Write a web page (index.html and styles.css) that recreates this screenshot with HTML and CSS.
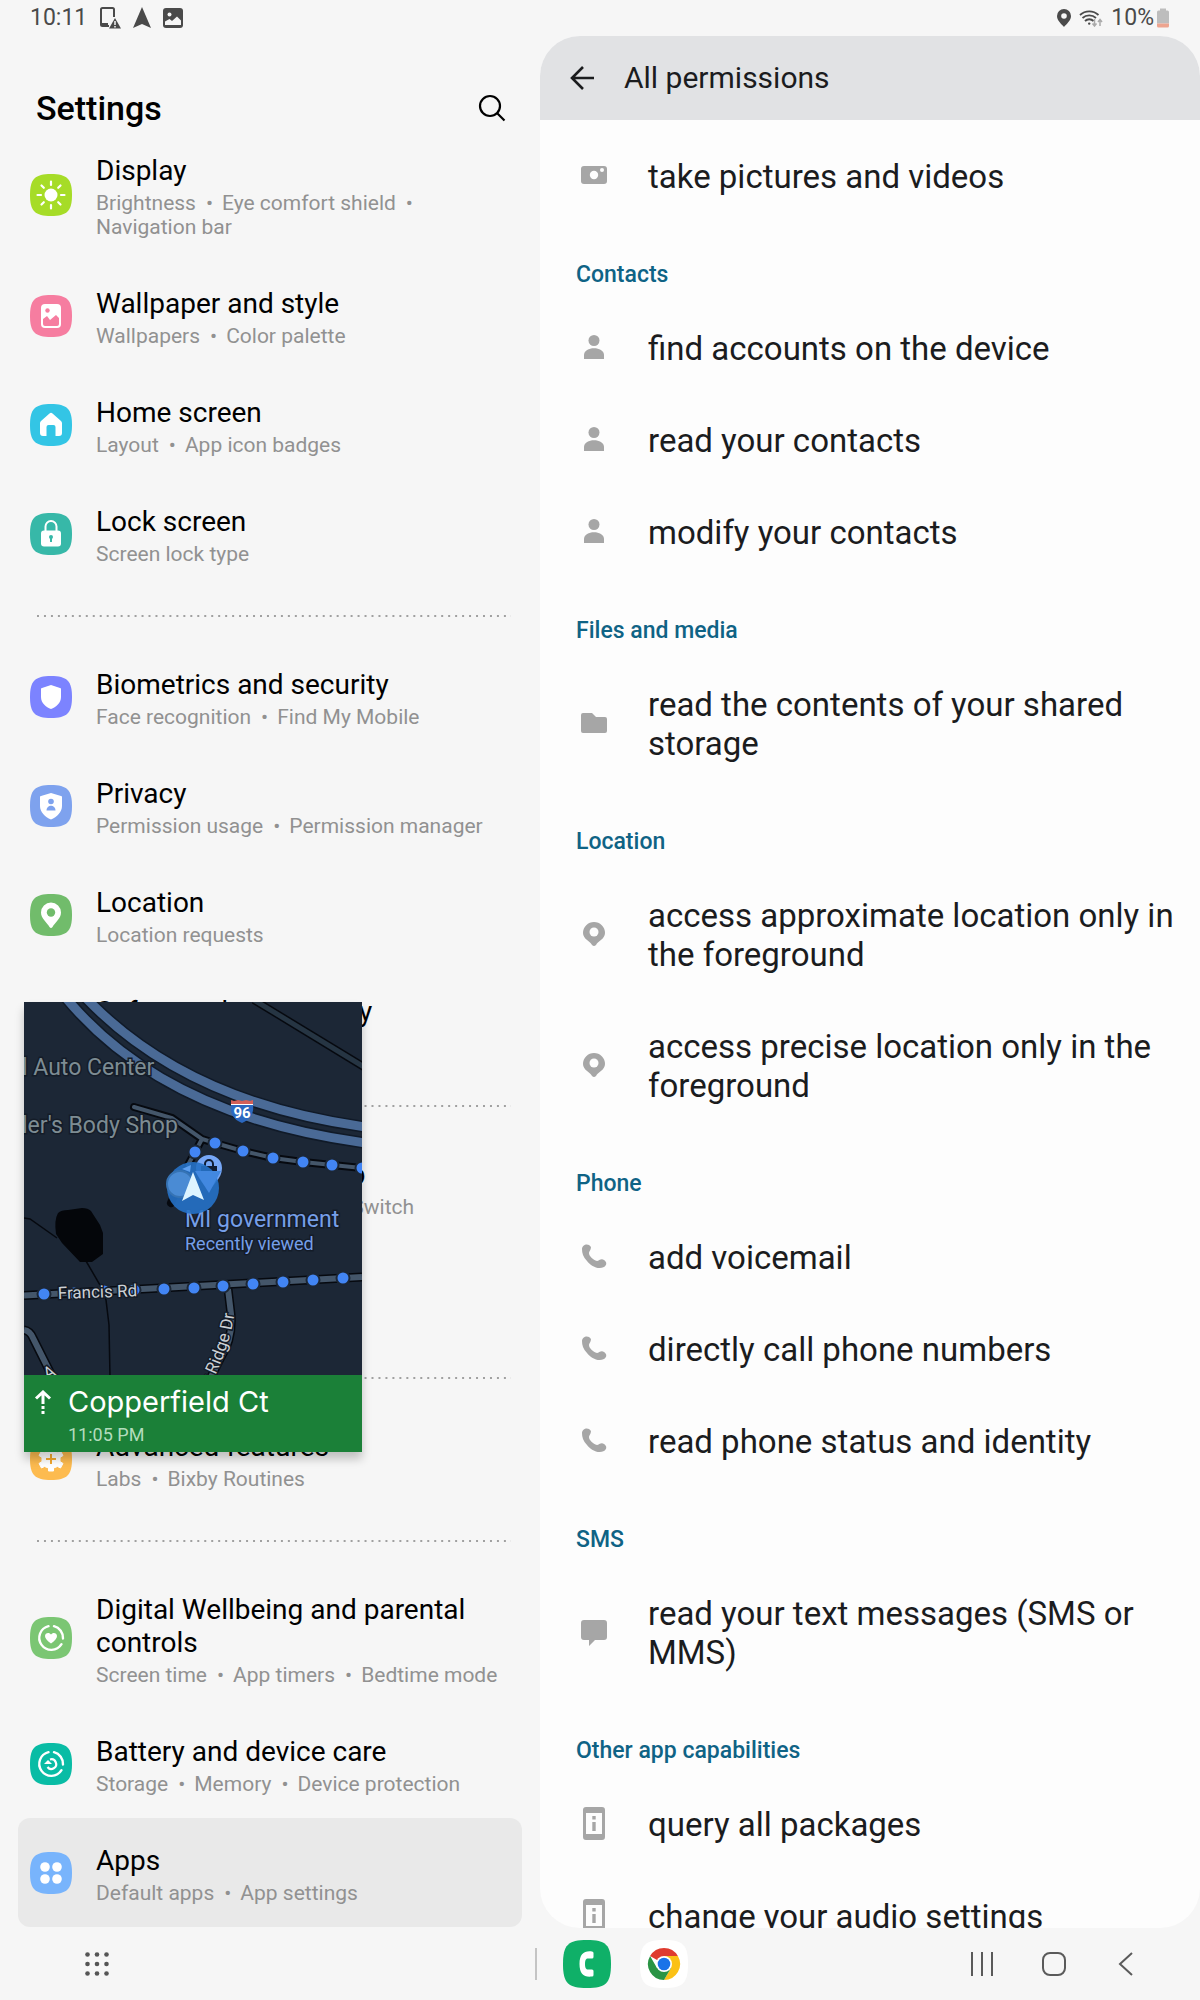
FILE: index.html
```html
<!DOCTYPE html>
<html lang="en">
<head>
<meta charset="utf-8">
<meta name="viewport" content="width=device-width, initial-scale=1">
<title>Settings</title>
<link rel="stylesheet" href="styles.css">
</head>
<body>
<div class="screen">
  <header class="status">
    <div class="status-group status-left">
      <time>10:11</time>
      <svg width="22" height="22" viewBox="0 0 22 22"><path d="M15 10V2.5A1.5 1.5 0 0 0 13.500 1h-10A1.500 1.500 0 0 0 2 2.500v15A1.500 1.500 0 0 0 3.500 19H10" fill="none" stroke="#4a4a4a" stroke-width="2"/><path d="M2 16h7v3H3z" fill="#4a4a4a"/><path d="M16 11l6 10.500H10z" fill="#4a4a4a"/><path d="M16 14v4M16 19v1.500" stroke="#f6f6f6" stroke-width="1.500"/></svg>
      <svg width="18" height="22" viewBox="0 0 18 22"><path d="M9 0l9 21-9-4-9 4z" fill="#4a4a4a"/></svg>
      <svg width="20" height="20" viewBox="0 0 20 20"><rect width="20" height="20" rx="3" fill="#4a4a4a"/><circle cx="6.500" cy="6.500" r="2" fill="#f6f6f6"/><path d="M2 13.500l4.500-2.500 2.500 2 5-4.500 4 4v4.500H2z" fill="#f6f6f6"/></svg>
    </div>
    <div class="status-group status-right">
      <svg width="14" height="18" viewBox="0 0 14 18"><path d="M7 0a7 7 0 0 0-7 7c0 4.500 4.500 8 7 11 2.500-3 7-6.500 7-11a7 7 0 0 0-7-7z" fill="#4a4a4a"/><circle cx="7" cy="7" r="2.800" fill="#f6f6f6"/></svg>
      <svg width="24" height="18" viewBox="0 0 24 18" fill="none" stroke="#4a4a4a" stroke-width="1.800"><path d="M1 6a13.500 13.500 0 0 1 18.500 0M3.500 9a10 10 0 0 1 13.500 0M6 12a6 6 0 0 1 8.500 0"/><circle cx="10.200" cy="14.600" r="1.200" fill="#4a4a4a" stroke="none"/><path d="M15.500 10v7M13.500 14.500l2 2.500 2-2.500M21 17v-6.500M19 13l2-2.500 2 2.500" stroke="#aaa" stroke-width="1.500"/></svg>
      <span class="battery">10%
        <svg width="12" height="20" viewBox="0 0 12 19"><path d="M3 2V0h6v2h1.500A1.500 1.500 0 0 1 12 3.500V15H0V3.500A1.500 1.500 0 0 1 1.500 2z" fill="#bdbdbd"/><path d="M0 15h12v2.500A1.500 1.500 0 0 1 10.500 19h-9A1.500 1.500 0 0 1 0 17.500z" fill="#eda48f"/></svg></span>
    </div>
  </header>

  <main class="panes">
    <nav class="settings" aria-label="Settings">
      <div class="settings-head">
        <h1>Settings</h1>
        <button class="icon-button" type="button" aria-label="Search"><svg width="28" height="28" viewBox="0 0 28 28" fill="none" stroke="#000" stroke-width="2.200"><circle cx="12" cy="12" r="10"/><path d="M19 19l7.500 7.500"/></svg></button>
      </div>

      <a class="item" href="#display">
        <svg class="tile" viewBox="0 0 42 42"><path fill="#a6dc27" d="M0 21C0 5 5 0 21 0s21 5 21 21-5 21-21 21S0 37 0 21z"/><circle cx="21" cy="21" r="6.500" fill="#fff"/><path d="M21 7.500v3.500M21 31v3.500M7.500 21h3.500M31 21h3.500M11.500 11.500l2.300 2.300M28.200 28.200l2.300 2.300M30.500 11.500l-2.300 2.300M13.800 28.200l-2.300 2.300" stroke="#fff" stroke-width="2.200" stroke-linecap="round"/></svg>
        <span class="label"><span class="title">Display</span><span class="sub">Brightness<i>•</i><wbr>Eye comfort shield<i>•</i><wbr>Navigation bar</span></span>
      </a>
      <a class="item" href="#wallpaper">
        <svg class="tile" viewBox="0 0 42 42"><path fill="#f67da0" d="M0 21C0 5 5 0 21 0s21 5 21 21-5 21-21 21S0 37 0 21z"/><rect x="11" y="9" width="20" height="24" rx="4" fill="#fff"/><circle cx="17.500" cy="15.500" r="2.200" fill="#f67da0"/><path d="M13 24l4-3 3 4 6-5 3 3v6a2 2 0 0 1-2 2H15a2 2 0 0 1-2-2z" fill="#f67da0"/></svg>
        <span class="label"><span class="title">Wallpaper and style</span><span class="sub">Wallpapers<i>•</i><wbr>Color palette</span></span>
      </a>
      <a class="item" href="#home">
        <svg class="tile" viewBox="0 0 42 42"><path fill="#33c5e5" d="M0 21C0 5 5 0 21 0s21 5 21 21-5 21-21 21S0 37 0 21z"/><path d="M19.500 9.600a2 2 0 0 1 3 0l8.500 7.400a3 3 0 0 1 1 2V29a3 3 0 0 1-3 3h-3.500v-9a2 2 0 0 0-2-2h-5a2 2 0 0 0-2 2v9H13a3 3 0 0 1-3-3V19a3 3 0 0 1 1-2z" fill="#fff"/></svg>
        <span class="label"><span class="title">Home screen</span><span class="sub">Layout<i>•</i><wbr>App icon badges</span></span>
      </a>
      <a class="item" href="#lock">
        <svg class="tile" viewBox="0 0 42 42"><path fill="#37b8a8" d="M0 21C0 5 5 0 21 0s21 5 21 21-5 21-21 21S0 37 0 21z"/><path d="M15.500 19v-5.500a5.500 5.500 0 0 1 11 0V19" fill="none" stroke="#fff" stroke-width="2"/><rect x="11" y="17.500" width="20" height="16" rx="3" fill="#fff"/><circle cx="21" cy="24" r="2" fill="#37b8a8"/><path d="M21 24v5" stroke="#37b8a8" stroke-width="2"/></svg>
        <span class="label"><span class="title">Lock screen</span><span class="sub">Screen lock type</span></span>
      </a>
      <hr class="dots">
      <a class="item" href="#biometrics">
        <svg class="tile" viewBox="0 0 42 42"><path fill="#7c83ff" d="M0 21C0 5 5 0 21 0s21 5 21 21-5 21-21 21S0 37 0 21z"/><path d="M21 9l9 3a1 1 0 0 1 1 1v8c0 6-5 10-10 12-5-2-10-6-10-12v-8a1 1 0 0 1 1-1z" fill="#fff"/></svg>
        <span class="label"><span class="title">Biometrics and security</span><span class="sub">Face recognition<i>•</i><wbr>Find My Mobile</span></span>
      </a>
      <a class="item" href="#privacy">
        <svg class="tile" viewBox="0 0 42 42"><path fill="#7ea2ee" d="M0 21C0 5 5 0 21 0s21 5 21 21-5 21-21 21S0 37 0 21z"/><path d="M21 8l10 3a1 1 0 0 1 1 1v9c0 6-5 11-11 13.500C15 32 10 27 10 21v-9a1 1 0 0 1 1-1z" fill="#fff"/><circle cx="21" cy="16.500" r="2.800" fill="#7ea2ee"/><path d="M16.500 25.500c0-6.500 9-6.500 9 0z" fill="#7ea2ee"/></svg>
        <span class="label"><span class="title">Privacy</span><span class="sub">Permission usage<i>•</i><wbr>Permission manager</span></span>
      </a>
      <a class="item" href="#location">
        <svg class="tile" viewBox="0 0 42 42"><path fill="#71bc6b" d="M0 21C0 5 5 0 21 0s21 5 21 21-5 21-21 21S0 37 0 21z"/><path d="M21 8.500a10 10 0 0 0-10 10c0 6 6 10 8.500 14.500q1.500 2 3 0C25 28.500 31 24.500 31 18.500a10 10 0 0 0-10-10z" fill="#fff"/><circle cx="21" cy="18.500" r="4.200" fill="#71bc6b"/></svg>
        <span class="label"><span class="title">Location</span><span class="sub">Location requests</span></span>
      </a>
      <a class="item" href="#safety">
        <svg class="tile" viewBox="0 0 42 42"><path fill="#f26c6c" d="M0 21C0 5 5 0 21 0s21 5 21 21-5 21-21 21S0 37 0 21z"/></svg>
        <span class="label"><span class="title">Safety and emergency</span><span class="sub">Medical info</span></span>
      </a>
      <hr class="dots">
      <a class="item" href="#accounts">
        <svg class="tile" viewBox="0 0 42 42"><path fill="#5b8def" d="M0 21C0 5 5 0 21 0s21 5 21 21-5 21-21 21S0 37 0 21z"/></svg>
        <span class="label"><span class="title">Accounts and backup</span><span class="sub">Manage accounts<i>•</i><wbr>Smart Switch</span></span>
      </a>
      <a class="item" href="#google">
        <svg class="tile" viewBox="0 0 42 42"><path fill="#4285f4" d="M0 21C0 5 5 0 21 0s21 5 21 21-5 21-21 21S0 37 0 21z"/></svg>
        <span class="label"><span class="title">Google</span><span class="sub">Google services</span></span>
      </a>
      <hr class="dots">
      <a class="item" href="#advanced">
        <svg class="tile" viewBox="0 0 42 42"><path fill="#fdbb4f" d="M0 21C0 5 5 0 21 0s21 5 21 21-5 21-21 21S0 37 0 21z"/><path d="M18.500 9h5v3.500l4 2 3-1.500 2.500 4.500-3 2v4l3 2-2.500 4.500-3-1.500-4 1.500V33h-5v-3l-4-1.500-3 1.500L9 25.500l3-2v-4l-3-2 2.500-4.500 3 1.500 4-2z" fill="#fff" stroke="#fff" stroke-linejoin="round"/><path d="M21 16v10M16 21h10" stroke="#f5a92f" stroke-width="2"/></svg>
        <span class="label"><span class="title">Advanced features</span><span class="sub">Labs<i>•</i><wbr>Bixby Routines</span></span>
      </a>
      <hr class="dots">
      <a class="item" href="#wellbeing">
        <svg class="tile" viewBox="0 0 42 42"><path fill="#7bc673" d="M0 21C0 5 5 0 21 0s21 5 21 21-5 21-21 21S0 37 0 21z"/><path d="M18.500 9.200a12 12 0 1 0 13 18M24 9.200A12 12 0 0 1 33 21.500" fill="none" stroke="#fff" stroke-width="2.400" stroke-linecap="round"/><path d="M21 26.500c-4-3-6-5-6-7.500 0-3.500 4.500-4 6-1.500 1.500-2.500 6-2 6 1.500 0 2.500-2 4.500-6 7.500z" fill="#fff"/></svg>
        <span class="label"><span class="title">Digital Wellbeing and parental controls</span><span class="sub">Screen time<i>•</i><wbr>App timers<i>•</i><wbr>Bedtime mode</span></span>
      </a>
      <a class="item" href="#battery">
        <svg class="tile" viewBox="0 0 42 42"><path fill="#09bca5" d="M0 21C0 5 5 0 21 0s21 5 21 21-5 21-21 21S0 37 0 21z"/><path d="M18.500 9.200a12 12 0 1 0 13 18M24 9.200A12 12 0 0 1 33 21.500" fill="none" stroke="#fff" stroke-width="2.400" stroke-linecap="round"/><path d="M20 16.500a4.800 4.800 0 1 1-2.500 7.500" fill="none" stroke="#fff" stroke-width="2.200"/><path d="M14 21l4-4 4 4z" fill="#fff"/></svg>
        <span class="label"><span class="title">Battery and device care</span><span class="sub">Storage<i>•</i><wbr>Memory<i>•</i><wbr>Device protection</span></span>
      </a>
      <a class="item selected" href="#apps" aria-current="page">
        <svg class="tile" viewBox="0 0 42 42"><path fill="#78b4fc" d="M0 21C0 5 5 0 21 0s21 5 21 21-5 21-21 21S0 37 0 21z"/><g fill="#fff"><circle cx="15" cy="15" r="4.800"/><circle cx="27" cy="15" r="4.800"/><circle cx="15" cy="27" r="4.800"/><circle cx="27" cy="27" r="4.800"/></g></svg>
        <span class="label"><span class="title">Apps</span><span class="sub">Default apps<i>•</i><wbr>App settings</span></span>
      </a>
    </nav>

    <section class="detail">
      <div class="appbar">
        <button class="icon-button" type="button" aria-label="Back"><svg width="26" height="26" viewBox="0 0 26 26" fill="none" stroke="#1b1c1e" stroke-width="2.600"><path d="M25 13H3M14 2L3 13l11 11"/></svg></button>
        <h2>All permissions</h2>
      </div>
      <div class="permissions">
        <ul>
          <li><svg class="perm" viewBox="0 0 32 32"><rect x="3" y="7" width="26" height="18" rx="3"/><circle cx="16" cy="16" r="4.200" fill="#fdfdfd"/><circle cx="24" cy="11" r="2" fill="#fdfdfd"/></svg><span>take pictures and videos</span></li>
        </ul>
        <h3>Contacts</h3>
        <ul>
          <li><svg class="perm" viewBox="0 0 32 32"><circle cx="16" cy="9.500" r="5.500"/><path d="M6 28v-4c0-9 20-9 20 0v4z"/></svg><span>find accounts on the device</span></li>
          <li><svg class="perm" viewBox="0 0 32 32"><circle cx="16" cy="9.500" r="5.500"/><path d="M6 28v-4c0-9 20-9 20 0v4z"/></svg><span>read your contacts</span></li>
          <li><svg class="perm" viewBox="0 0 32 32"><circle cx="16" cy="9.500" r="5.500"/><path d="M6 28v-4c0-9 20-9 20 0v4z"/></svg><span>modify your contacts</span></li>
        </ul>
        <h3>Files and media</h3>
        <ul>
          <li><svg class="perm" viewBox="0 0 32 32"><path d="M5 6h9l4 4h9a2 2 0 0 1 2 2v12a2 2 0 0 1-2 2H5a2 2 0 0 1-2-2V8a2 2 0 0 1 2-2z"/></svg><span>read the contents of your shared storage</span></li>
        </ul>
        <h3>Location</h3>
        <ul>
          <li><svg class="perm" viewBox="0 0 32 32"><path d="M16 4A11 11 0 0 0 5 15c0 6 7 8 9 12q2 2 4 0c2-4 9-6 9-12A11 11 0 0 0 16 4z"/><circle cx="16" cy="14" r="4.500" fill="#fdfdfd"/></svg><span>access approximate location only in the foreground</span></li>
          <li><svg class="perm" viewBox="0 0 32 32"><path d="M16 4A11 11 0 0 0 5 15c0 6 7 8 9 12q2 2 4 0c2-4 9-6 9-12A11 11 0 0 0 16 4z"/><circle cx="16" cy="14" r="4.500" fill="#fdfdfd"/></svg><span>access precise location only in the foreground</span></li>
        </ul>
        <h3>Phone</h3>
        <ul>
          <li><svg class="perm" viewBox="0 0 32 32"><path d="M4 9c0-4 6-7 9-2 0 3-2 4-2 6 0 3 4 7 8 8 2 0 4-3 7-1 3 2 3 5 0 7-6 3-13-1-17-6C5 17 4 13 4 9z"/></svg><span>add voicemail</span></li>
          <li><svg class="perm" viewBox="0 0 32 32"><path d="M4 9c0-4 6-7 9-2 0 3-2 4-2 6 0 3 4 7 8 8 2 0 4-3 7-1 3 2 3 5 0 7-6 3-13-1-17-6C5 17 4 13 4 9z"/></svg><span>directly call phone numbers</span></li>
          <li><svg class="perm" viewBox="0 0 32 32"><path d="M4 9c0-4 6-7 9-2 0 3-2 4-2 6 0 3 4 7 8 8 2 0 4-3 7-1 3 2 3 5 0 7-6 3-13-1-17-6C5 17 4 13 4 9z"/></svg><span>read phone status and identity</span></li>
        </ul>
        <h3>SMS</h3>
        <ul>
          <li><svg class="perm" viewBox="0 0 32 32"><path d="M6 4h20a3 3 0 0 1 3 3v14a3 3 0 0 1-3 3h-9l-6 6v-6H6a3 3 0 0 1-3-3V7a3 3 0 0 1 3-3z"/></svg><span>read your text messages (SMS or MMS)</span></li>
        </ul>
        <h3>Other app capabilities</h3>
        <ul>
          <li><svg class="perm" viewBox="0 0 32 32"><path fill-rule="evenodd" d="M8 0h16a3 3 0 0 1 3 3v27a3 3 0 0 1-3 3H8a3 3 0 0 1-3-3V3a3 3 0 0 1 3-3zm0 6v21h16V6z"/><path d="M14.300 9h3.400v3.400h-3.400zM14.300 15h3.400v9h-3.400z"/></svg><span>query all packages</span></li>
          <li><svg class="perm" viewBox="0 0 32 32"><path fill-rule="evenodd" d="M8 0h16a3 3 0 0 1 3 3v27a3 3 0 0 1-3 3H8a3 3 0 0 1-3-3V3a3 3 0 0 1 3-3zm0 6v21h16V6z"/><path d="M14.300 9h3.400v3.400h-3.400zM14.300 15h3.400v9h-3.400z"/></svg><span>change your audio settings</span></li>
        </ul>
      </div>
    </section>
  </main>

  <footer class="taskbar">
    <button class="icon-button drawer" type="button" aria-label="All apps"><svg width="26" height="26" viewBox="0 0 26 26" fill="#555"><circle cx="3.500" cy="3.500" r="2.300"/><circle cx="13" cy="3.500" r="2.300"/><circle cx="22.500" cy="3.500" r="2.300"/><circle cx="3.500" cy="13" r="2.300"/><circle cx="13" cy="13" r="2.300"/><circle cx="22.500" cy="13" r="2.300"/><circle cx="3.500" cy="22.500" r="2.300"/><circle cx="13" cy="22.500" r="2.300"/><circle cx="22.500" cy="22.500" r="2.300"/></svg></button>
    <div class="dock">
      <button class="icon-button" type="button" aria-label="Phone"><svg width="48" height="48" viewBox="0 0 48 48"><path d="M0 24C0 5 5 0 24 0s24 5 24 24-5 24-24 24S0 43 0 24z" fill="#0fb068"/><path d="M29 11.500c-8-1-12.500 2.500-12.500 12.500S21 37.500 29 36.500a1.500 1.500 0 0 0 1.500-1.500v-4a1.500 1.500 0 0 0-1.500-1.500h-4c-2 0-3-1.500-3-5.500s1-5.500 3-5.500h4a1.500 1.500 0 0 0 1.500-1.500v-4a1.500 1.500 0 0 0-1.500-1.500z" fill="#fff"/></svg></button>
      <button class="icon-button" type="button" aria-label="Chrome"><svg width="48" height="48" viewBox="0 0 48 48"><path d="M0 24C0 5 5 0 24 0s24 5 24 24-5 24-24 24S0 43 0 24z" fill="#fff"/><path d="M24 24L10.100 16A16 16 0 0 1 37.900 16z" fill="#df3b2f"/><path d="M24 16h13.900A16 16 0 0 1 24 40l7-12z" fill="#fbc116"/><path d="M17 28L10.100 16A16 16 0 0 0 24 40l7-12z" fill="#2a9445"/><circle cx="24" cy="24" r="8" fill="#fff"/><circle cx="24" cy="24" r="6.300" fill="#1a73e8"/></svg></button>
    </div>
    <div class="navkeys">
      <button class="icon-button" type="button" aria-label="Recents"><svg width="24" height="24" viewBox="0 0 24 24" stroke="#5a5a5a" stroke-width="2"><path d="M2 0v24M12 0v24M22 0v24"/></svg></button>
      <button class="icon-button" type="button" aria-label="Home"><svg width="24" height="24" viewBox="0 0 24 24" fill="none" stroke="#5a5a5a" stroke-width="2"><rect x="1" y="1" width="22" height="22" rx="7"/></svg></button>
      <button class="icon-button" type="button" aria-label="Back"><svg width="24" height="24" viewBox="0 0 24 24" fill="none" stroke="#5a5a5a" stroke-width="2"><path d="M18 1L6 12l12 11"/></svg></button>
    </div>
  </footer>

  <aside class="pip" aria-label="Navigation">
    <svg class="map" viewBox="24 1002 338 373" preserveAspectRatio="xMidYMid slice">
      <rect x="24" y="1002" width="338" height="373" fill="#1c2736"/>
      <g fill="none">
        <path d="M254 1000L364 1067" stroke="#06090f" stroke-width="8"/><path d="M254 1000L364 1067" stroke="#263543" stroke-width="5"/>
        <path d="M66 998C130 1075 230 1125 366 1143M86 998C150 1065 240 1110 366 1127" stroke="#101a28" stroke-width="12"/>
        <path d="M66 998C130 1075 230 1125 366 1143M86 998C150 1065 240 1110 366 1127" stroke="#4a6a96" stroke-width="9"/>
        <path d="M134 1107L172 1118L202 1139L215 1143L243 1151L273 1158L303 1162L362 1168M202 1139L188 1165L171 1203" stroke="#06090f" stroke-width="8" stroke-linecap="round"/>
        <path d="M134 1107L172 1118L202 1139L215 1143L243 1151L273 1158L303 1162L362 1168M202 1139L188 1165" stroke="#44566a" stroke-width="4" stroke-linecap="round"/>
        <path d="M24 1218l6 1 27 19M86 1261l14 24 6 15 3 25 1 52" stroke="#06090f" stroke-width="1.500"/>
        <path d="M24 1330q6 1 9 8l20 40M24 1295.500L362 1277M228 1289l3 25q2 25-10 43l-11 22" stroke="#06090f" stroke-width="9"/>
        <path d="M24 1330q6 1 9 8l20 40M24 1295.500L362 1277M228 1289l3 25q2 25-10 43l-11 22" stroke="#44566a" stroke-width="6"/>
      </g>
      <path d="M58 1213q3-3 10-3l14-2q6 0 9 3l9 14 3 8v21l-11 8H80l-18-19-6-9q-2-14 2-21z" fill="#04060a"/>
      <g fill="#4285f4" stroke="#1c2736" stroke-width="2">
        <circle cx="195" cy="1152" r="6.500"/><circle cx="215" cy="1143" r="6.500"/><circle cx="243" cy="1151" r="6.500"/><circle cx="273" cy="1158" r="6.500"/><circle cx="303" cy="1162" r="6.500"/><circle cx="332" cy="1165" r="6.500"/><circle cx="362" cy="1168" r="6.500"/>
        <circle cx="44" cy="1294" r="6.500"/><circle cx="74" cy="1293" r="6.500"/><circle cx="104" cy="1291" r="6.500"/><circle cx="134" cy="1290" r="6.500"/><circle cx="164" cy="1289" r="6.500"/><circle cx="194" cy="1288" r="6.500"/><circle cx="223" cy="1286" r="6.500"/><circle cx="253" cy="1284" r="6.500"/><circle cx="283" cy="1282" r="6.500"/><circle cx="313" cy="1280" r="6.500"/><circle cx="343" cy="1278" r="6.500"/>
      </g>
      <path d="M231 1104h22q2 14-11 19-13-5-11-19z" fill="#2b68c0"/><path d="M231 1100l3 1 4-1 4 1 4-1 4 1 3-1v4h-22z" fill="#d35f58"/><path d="M231 1104.500h22" stroke="#fff"/>
      <text class="shield" x="242" y="1118" text-anchor="middle">96</text>
      <g class="place"><text x="22" y="1075">l Auto Center</text><text x="22" y="1133">ler's Body Shop</text></g>
      <g class="poi"><text class="poi-name" x="185" y="1227">MI government</text><text class="poi-note" x="185" y="1250">Recently viewed</text></g>
      <g class="road">
        <text x="58" y="1299" transform="rotate(-2 58 1299)">Francis Rd</text>
        <path id="ridge" d="M207 1392Q233 1344 236 1300" fill="none" stroke="none"/>
        <text><textPath href="#ridge" startOffset="9">r Ridge Dr</textPath></text>
        <text x="47" y="1380" transform="rotate(-28 47 1380)">A</text>
      </g>
      <path d="M209 1192c-3-7-13-13-13-24a13 13 0 0 1 26 0c0 11-10 17-13 24z" fill="#76a7f7"/>
      <path d="M201 1166h16v10h-16z" fill="#101c34"/><path d="M205 1167v-3a4 4 0 0 1 8 0v3M204 1172q5 4 9 0" fill="none" stroke="#101c34" stroke-width="2"/><path d="M205 1172q4 3 8 0" fill="none" stroke="#76a7f7" stroke-width="2"/>
      <circle cx="193" cy="1188" r="26" fill="#2672c8" fill-opacity=".9"/>
      <path d="M209 1193l-14-22h26z" fill="#4288e0"/><path d="M182 1169l9-4-1 7z" fill="#5ea0f0"/>
      <circle cx="180" cy="1184" r="13" fill="#4a8bd4" stroke="#3673b4" stroke-width="2"/>
      <path d="M193 1172l11 28-11-5-11 6z" fill="#ddf4ff"/>
    </svg>
    <div class="turn">
      <svg width="18" height="24" viewBox="0 0 18 24" fill="none" stroke="#fff" stroke-width="3"><path d="M2 8.500l7-6.500 7 6.500M9 3v11M9 16v3M9 21v3"/></svg>
      <strong>Copperfield Ct</strong>
      <time>11:05 PM</time>
    </div>
  </aside>
</div>
</body>
</html>
```

FILE: styles.css
```css
* { box-sizing: border-box; }

body {
  margin: 0;
  font-family: Roboto, "Liberation Sans", sans-serif;
  background: #f6f6f6;
  color: #000;
}

h1, h2, h3, ul { margin: 0; padding: 0; }
svg { display: block; flex: none; }

.icon-button {
  display: flex;
  padding: 0;
  border: 0;
  background: none;
}

.screen {
  position: relative;
  display: grid;
  grid-template-rows: 36px minmax(0, 1fr) 72px;
  height: 100vh;
  overflow: hidden;
}

/* Status bar */
.status {
  display: flex;
  justify-content: space-between;
  padding: 0 31px 0 30px;
  font-size: 23px;
  line-height: 36px;
  color: #4a4a4a;
}
.status-group { display: flex; align-items: center; }
.status-left { gap: 12px; }
.status-right { gap: 8px; }
.battery { display: flex; align-items: center; gap: 3px; }

/* Two panes */
.panes {
  display: grid;
  grid-template-columns: 45% 55%;
  min-height: 0;
}

.settings { overflow: hidden; }
.settings-head {
  display: flex;
  align-items: center;
  justify-content: space-between;
  height: 92px;
  padding: 52px 34px 0 36px;
}
.settings-head h1 { font-size: 34px; font-weight: 500; line-height: 42px; }

.item {
  display: flex;
  align-items: center;
  gap: 24px;
  margin: 0 18px;
  padding: 22px 12px;
  border-radius: 12px;
  color: inherit;
  text-decoration: none;
}
.item.selected { background: #e9e9e9; }
.tile { width: 42px; height: 42px; }
.label { display: flex; flex-direction: column; gap: 4px; padding-top: 4px; }
.title { font-size: 28px; line-height: 33px; }
.sub { font-size: 21px; line-height: 24px; color: #919191; }
.sub i { margin: 0 9px 0 10px; font-style: normal; }

.dots {
  height: 2px;
  margin: 27px 29px 25px 37px;
  border: 0;
  background: linear-gradient(to right, #a0a0a0 2px, transparent 2px) 0 0 / 7px 2px round;
}

/* Permissions pane */
.detail {
  overflow: hidden;
  border-radius: 40px;
  background: #fdfdfd;
  color: #1b1c1e;
}
.appbar {
  display: flex;
  align-items: center;
  gap: 29px;
  height: 84px;
  padding: 0 29px;
  background: #e1e2e4;
}
.appbar h2 { font-size: 30px; font-weight: 400; line-height: 36px; }

.permissions { padding: 11px 20px 0 36px; }
.permissions h3 {
  padding: 38px 0 14px;
  font-size: 23px;
  font-weight: 500;
  line-height: 28px;
  color: #0f6385;
}
.permissions ul { list-style: none; }
.permissions li {
  display: flex;
  align-items: center;
  gap: 38px;
  min-height: 92px;
  padding: 26px 0 27px 2px;
  font-size: 33px;
  line-height: 39px;
}
.perm { width: 32px; height: 32px; margin-bottom: 3px; fill: #a6a6a6; overflow: visible; }

/* Task bar */
.taskbar {
  display: grid;
  grid-template-columns: 535px 1fr auto;
  align-items: center;
  padding-right: 62px;
}
.drawer { margin-left: 84px; }
.dock {
  display: flex;
  align-items: center;
  gap: 29px;
  height: 32px;
  padding-left: 26px;
  border-left: 2px solid #c4c4c4;
}
.navkeys { display: flex; gap: 48px; }

/* Floating navigation window */
.pip {
  position: absolute;
  left: 24px;
  top: 1002px;
  width: 338px;
  box-shadow: 0 7px 9px rgba(0, 0, 0, .22);
}
.map { width: 100%; height: auto; }
.map text { paint-order: stroke; stroke: #141c28; stroke-width: 3px; }
.map .shield { font-size: 15px; font-weight: 700; fill: #fff; stroke: none; }
.place { font-size: 23px; fill: #7d8c93; }
.poi { fill: #769fe8; }
.poi-name { font-size: 23px; }
.poi-note { font-size: 18px; }
.road { font-size: 17px; fill: #ccd0d4; }

.turn {
  display: grid;
  grid-template-columns: 18px 1fr;
  column-gap: 16px;
  align-items: center;
  padding: 7px 10px 4px;
  background: #1b8038;
  color: #fff;
}
.turn strong { font-family: Inter, Roboto, sans-serif; font-size: 29px; font-weight: 400; line-height: 40px; }
.turn time { grid-column: 2; font-size: 18px; line-height: 26px; color: #b3dcbd; }
```
